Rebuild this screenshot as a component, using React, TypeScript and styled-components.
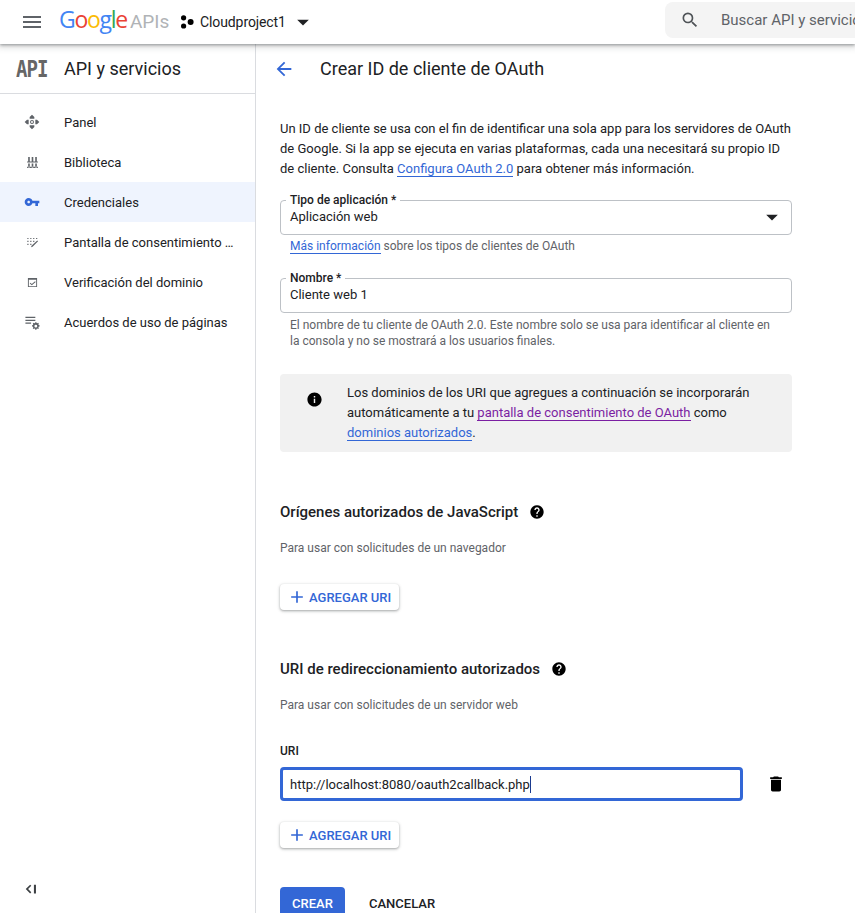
import styled, { createGlobalStyle } from 'styled-components'

const GlobalStyle = createGlobalStyle`
  html, body {
    margin: 0;
    padding: 0;
    height: 100%;
    overflow: hidden;
    background: #fff;
    font-family: Roboto, "Liberation Sans", Arial, sans-serif;
    color: #202124;
  }
  * { box-sizing: border-box; }
`

const BLUE = '#3367d6'

const icons = {
  menu: 'M3 18h18v-2H3v2zm0-5h18v-2H3v2zm0-7v2h18V6H3z',
  drop: 'M7 10l5 5 5-5z',
  search: 'M15.5 14h-.79l-.28-.27A6.471 6.471 0 0 0 16 9.5 6.5 6.5 0 1 0 9.5 16c1.61 0 3.09-.59 4.23-1.57l.27.28v.79l5 4.99L20.49 19l-4.99-5zm-6 0C7.01 14 5 11.99 5 9.5S7.01 5 9.5 5 14 7.01 14 9.5 11.99 14 9.5 14z',
  back: 'M20 11H7.83l5.59-5.59L12 4l-8 8 8 8 1.41-1.41L7.83 13H20v-2z',
  key: 'M12.65 10C11.83 7.67 9.61 6 7 6c-3.31 0-6 2.69-6 6s2.69 6 6 6c2.61 0 4.83-1.67 5.65-4H17v4h4v-4h2v-4H12.65zM7 14c-1.1 0-2-.9-2-2s.9-2 2-2 2 .9 2 2-.9 2-2 2z',
  info: 'M12 2C6.48 2 2 6.48 2 12s4.48 10 10 10 10-4.48 10-10S17.52 2 12 2zm1 15h-2v-6h2v6zm0-8h-2V7h2v2z',
  help: 'M12 2C6.48 2 2 6.48 2 12s4.48 10 10 10 10-4.48 10-10S17.52 2 12 2zm1 17h-2v-2h2v2zm2.07-7.75l-.9.92C13.45 12.9 13 13.5 13 15h-2v-.5c0-1.1.45-2.1 1.17-2.83l1.24-1.26c.37-.36.59-.86.59-1.41 0-1.1-.9-2-2-2s-2 .9-2 2H8c0-2.21 1.79-4 4-4s4 1.79 4 4c0 .88-.36 1.68-.93 2.25z',
  add: 'M19 13h-6v6h-2v-6H5v-2h6V5h2v6h6v2z',
  trash: 'M6 19c0 1.1.9 2 2 2h8c1.1 0 2-.9 2-2V7H6v12zM19 4h-3.5l-1-1h-5l-1 1H5v2h14V4z',
  panel: 'M12 1l3.5 3.5V7h-7V4.5zM12 23l-3.5-3.5V17h7v2.5zM1 12l3.5-3.5H7v7H4.5zM23 12l-3.5 3.5H17v-7h2.5zM12 9a3 3 0 1 0 0 6 3 3 0 0 0 0-6zM12 10.5a1.5 1.5 0 1 1 0 3 1.5 1.5 0 0 1 0-3z',
  library: 'M4 2h3v8H4zM10.5 2h3v8h-3zM17 2h3v8h-3zM2 10h20v2H2zM4 14h3v7H4zM10.5 14h3v7h-3zM17 14h3v7h-3zM2 20h20v2H2z',
  consent: 'M4 5h2v2H4zM9 5h2v2H9zM14 5h2v2h-2zM19 5h2v2h-2zM4 10h2v2H4zM9 10h2v2H9zM14 10h2v2h-2zM4 15h2v2H4zM9 15h2v2H9zM21 9.5l1.4 1.4L13 20.3l-2.5.6.6-2.5z',
  verify: 'M2 2h20v20H2zM4 6v14h16V6zM17.5 9.5L19 11l-8.5 7L6 14l1.5-1.5 3 2.5z',
  terms: 'M2 4h14v1.8H2zM2 8h14v1.8H2zM2 12h8v1.8H2zM17.5 11.5l.3 1.3 1 .4 1.1-.7 1.1 1.1-.7 1.1.4 1 1.3.3v1.6l-1.3.3-.4 1 .7 1.1-1.1 1.1-1.1-.7-1 .4-.3 1.3h-1.6l-.3-1.3-1-.4-1.1.7-1.1-1.1.7-1.1-.4-1-1.3-.3V16l1.3-.3.4-1-.7-1.1 1.1-1.1 1.1.7 1-.4.3-1.3zM16.7 15.2a2 2 0 1 0 0 4 2 2 0 0 0 0-4z',
  collapse: 'M12.5 6.5L10.5 4.5 3 12l7.5 7.5 2-2L7 12zM17 4.5h3.5v15H17z',
}

type IconName = keyof typeof icons

const Icon = ({ name, size = 24, color = 'currentColor' }: { name: IconName; size?: number; color?: string }) => (
  <svg width={size} height={size} viewBox="0 0 24 24" fill={color} fillRule="evenodd" style={{ flex: 'none', display: 'block' }}>
    <path d={icons[name]} />
  </svg>
)

const navItems: { label: string; icon: IconName; size: number; active?: boolean }[] = [
  { label: 'Panel', icon: 'panel', size: 16 },
  { label: 'Biblioteca', icon: 'library', size: 13 },
  { label: 'Credenciales', icon: 'key', size: 16, active: true },
  { label: 'Pantalla de consentimiento …', icon: 'consent', size: 14 },
  { label: 'Verificación del dominio', icon: 'verify', size: 11 },
  { label: 'Acuerdos de uso de páginas', icon: 'terms', size: 17 },
]

function App() {
  return (
    <Page>
      <GlobalStyle />
      <TopBar>
        <MenuButton>
          <Icon name="menu" size={24} color="#5f6368" />
        </MenuButton>
        <Logo>
          <span style={{ color: '#4285f4' }}>G</span>
          <span style={{ color: '#ea4335' }}>o</span>
          <span style={{ color: '#fbbc05' }}>o</span>
          <span style={{ color: '#4285f4' }}>g</span>
          <span style={{ color: '#34a853' }}>l</span>
          <span style={{ color: '#ea4335' }}>e</span>
          <LogoProduct>APIs</LogoProduct>
        </Logo>
        <Project>
          <svg width="14" height="14" viewBox="0 0 14 14" fill="#000">
            <circle cx="3.6" cy="2.8" r="2.6" />
            <circle cx="3.6" cy="11" r="2.6" />
            <circle cx="10.6" cy="7" r="3" />
          </svg>
          <ProjectName>Cloudproject1</ProjectName>
          <Icon name="drop" size={28} color="#202124" />
        </Project>
        <SearchBox>
          <Icon name="search" size={20} color="#4f5357" />
          <SearchText>Buscar API y servicios</SearchText>
        </SearchBox>
      </TopBar>
      <Body>
        <Sidebar>
          <SideTitle>
            <ApiMark>API</ApiMark>
            <SideTitleText>API y servicios</SideTitleText>
          </SideTitle>
          <Nav>
            {navItems.map((item) => (
              <NavItem key={item.label} $active={item.active}>
                <NavIcon>
                  <Icon name={item.icon} size={item.size} color={item.active ? BLUE : '#5f6368'} />
                </NavIcon>
                {item.label}
              </NavItem>
            ))}
          </Nav>
          <CollapseRow>
            <Icon name="collapse" size={14} color="#3c4043" />
          </CollapseRow>
        </Sidebar>
        <Main>
          <PageHead>
            <Icon name="back" size={22} color={BLUE} />
            <PageTitle>Crear ID de cliente de OAuth</PageTitle>
          </PageHead>
          <Content>
            <Intro>
              Un ID de cliente se usa con el fin de identificar una sola app para los servidores de OAuth de Google. Si la app se ejecuta en varias plataformas, cada una necesitará su propio ID de cliente. Consulta <Link>Configura OAuth 2.0</Link> para obtener más información.
            </Intro>
            <FieldBox $top={21}>
              <FieldLabel>Tipo de aplicación *</FieldLabel>
              <FieldValue>Aplicación web</FieldValue>
              <Icon name="drop" size={28} color="#202124" />
            </FieldBox>
            <Hint $top={3}>
              <Link>Más información</Link> sobre los tipos de clientes de OAuth
            </Hint>
            <FieldBox $top={24}>
              <FieldLabel>Nombre *</FieldLabel>
              <FieldValue>Cliente web 1</FieldValue>
            </FieldBox>
            <Hint $top={4}>
              El nombre de tu cliente de OAuth 2.0. Este nombre solo se usa para identificar al cliente en la consola y no se mostrará a los usuarios finales.
            </Hint>
            <InfoBox>
              <InfoIcon>
                <Icon name="info" size={17} color="#000" />
              </InfoIcon>
              <InfoText>
                Los dominios de los URI que agregues a continuación se incorporarán automáticamente a tu <VisitedLink>pantalla de consentimiento de OAuth</VisitedLink> como <Link>dominios autorizados</Link>.
              </InfoText>
            </InfoBox>
            <Section $top={49}>
              <SectionTitle>
                Orígenes autorizados de JavaScript
                <Icon name="help" size={16} color="#000" />
              </SectionTitle>
              <SectionHint>Para usar con solicitudes de un navegador</SectionHint>
              <AddButton $top={28}>
                <Icon name="add" size={20} color={BLUE} />
                AGREGAR URI
              </AddButton>
            </Section>
            <Section $top={48}>
              <SectionTitle>
                URI de redireccionamiento autorizados
                <Icon name="help" size={16} color="#000" />
              </SectionTitle>
              <SectionHint>Para usar con solicitudes de un servidor web</SectionHint>
              <UriLabel>URI</UriLabel>
              <UriRow>
                <UriInput>
                  http://localhost:8080/oauth2callback.php
                  <Caret />
                </UriInput>
                <Icon name="trash" size={20} color="#000" />
              </UriRow>
              <AddButton $top={21}>
                <Icon name="add" size={20} color={BLUE} />
                AGREGAR URI
              </AddButton>
            </Section>
            <Actions>
              <PrimaryButton>CREAR</PrimaryButton>
              <TextButton>CANCELAR</TextButton>
            </Actions>
          </Content>
        </Main>
      </Body>
    </Page>
  )
}

const Page = styled.div`
  width: 855px;
  height: 913px;
  overflow: hidden;
  display: flex;
  flex-direction: column;
`

const TopBar = styled.header`
  height: 44px;
  flex: none;
  display: flex;
  align-items: center;
  padding-left: 20px;
  background: #fff;
  box-shadow: 0 1px 3px rgba(60, 64, 67, 0.5), 0 2px 6px 2px rgba(60, 64, 67, 0.15);
  position: relative;
  z-index: 2;
`

const MenuButton = styled.div`
  width: 24px;
  height: 24px;
  margin-right: 15px;
`

const Logo = styled.div`
  width: 106px;
  font-family: "Open Sans", sans-serif;
  font-size: 23px;
  letter-spacing: -1.3px;
  line-height: 24px;
  white-space: nowrap;
  margin-top: -4px;
`

const LogoProduct = styled.span`
  color: #b0b3b6;
  margin-left: 3px;
  font-family: Roboto, sans-serif;
  font-size: 19px;
  letter-spacing: 0;
`

const Project = styled.div`
  display: flex;
  align-items: center;
  margin-left: 15px;
`

const ProjectName = styled.span`
  font-size: 14px;
  letter-spacing: -0.1px;
  color: #202124;
  margin: 0 3px 0 6px;
`

const SearchBox = styled.div`
  margin-left: auto;
  width: 190px;
  height: 36px;
  margin-top: -4px;
  border-radius: 8px 0 0 8px;
  background: #f4f4f4;
  display: flex;
  align-items: center;
  padding-left: 15px;
  overflow: hidden;
`

const SearchText = styled.span`
  margin-left: 21px;
  font-size: 15px;
  color: #5f6368;
  white-space: nowrap;
`

const Body = styled.div`
  flex: 1;
  display: flex;
  min-height: 0;
`

const Sidebar = styled.aside`
  width: 256px;
  flex: none;
  border-right: 1px solid #dadce0;
  display: flex;
  flex-direction: column;
`

const SideTitle = styled.div`
  height: 50px;
  flex: none;
  border-bottom: 1px solid #dadce0;
  display: flex;
  align-items: center;
  padding-left: 16px;
`

const ApiMark = styled.span`
  width: 48px;
  font-family: "DejaVu Sans Mono", monospace;
  font-weight: 700;
  font-size: 19px;
  letter-spacing: -1px;
  color: #666;
  transform: scaleY(1.2);
`

const SideTitleText = styled.span`
  font-size: 18px;
  color: #202124;
`

const Nav = styled.nav`
  padding-top: 8px;
`

const NavItem = styled.div<{ $active?: boolean }>`
  height: 40px;
  display: flex;
  align-items: center;
  font-size: 13px;
  padding-left: 24px;
  color: #202124;
  background: ${(p) => (p.$active ? '#eff4fe' : 'transparent')};
`

const NavIcon = styled.span`
  width: 16px;
  margin-right: 24px;
  display: flex;
  justify-content: center;
`

const CollapseRow = styled.div`
  margin-top: auto;
  padding: 0 0 17px 24px;
`

const Main = styled.main`
  flex: 1;
  min-width: 0;
`

const PageHead = styled.div`
  height: 50px;
  border-bottom: 1px solid transparent;
  display: flex;
  align-items: center;
  padding-left: 17px;
`

const PageTitle = styled.h1`
  margin: 0 0 0 25px;
  font-size: 18px;
  font-weight: 400;
  color: #202124;
`

const Content = styled.div`
  padding: 25px 63px 0 24px;
`

const Intro = styled.p`
  margin: 0;
  font-size: 13px;
  line-height: 20px;
  color: #202124;
`

const Link = styled.span`
  color: ${BLUE};
  border-bottom: 1px solid ${BLUE};
`

const VisitedLink = styled.span`
  color: #7b1fa2;
  border-bottom: 1px solid #7b1fa2;
`

const FieldBox = styled.div<{ $top: number }>`
  position: relative;
  height: 35px;
  margin-top: ${(p) => p.$top}px;
  border: 1px solid #bdc1c6;
  border-radius: 4px;
  display: flex;
  align-items: center;
  justify-content: space-between;
  padding: 0 5px 2px 9px;
`

const FieldLabel = styled.label`
  position: absolute;
  left: 5px;
  top: -8px;
  padding: 0 4px;
  background: #fff;
  font-size: 12px;
  line-height: 14px;
  font-weight: 500;
  color: #202124;
`

const FieldValue = styled.span`
  font-size: 13px;
  color: #202124;
`

const Hint = styled.p<{ $top: number }>`
  margin: ${(p) => p.$top}px 0 0;
  padding: 0 20px 0 10px;
  font-size: 12px;
  line-height: 16px;
  color: #5f6368;
`

const InfoBox = styled.div`
  margin-top: 25px;
  height: 78px;
  background: #f1f1f1;
  border-radius: 4px;
  display: flex;
  padding: 9px 20px 0 0;
`

const InfoIcon = styled.div`
  width: 67px;
  flex: none;
  padding: 8px 0 0 26px;
`

const InfoText = styled.div`
  font-size: 13px;
  line-height: 20px;
  color: #202124;
`

const Section = styled.section<{ $top: number }>`
  margin-top: ${(p) => p.$top}px;
`

const SectionTitle = styled.h2`
  margin: 0;
  display: flex;
  align-items: center;
  gap: 11px;
  font-size: 15px;
  line-height: 22px;
  font-weight: 500;
  color: #202124;
`

const SectionHint = styled.p`
  margin: 17px 0 0;
  font-size: 12px;
  line-height: 16px;
  color: #5f6368;
`

const AddButton = styled.div<{ $top: number }>`
  margin-top: ${(p) => p.$top}px;
  width: 119px;
  height: 26px;
  display: flex;
  align-items: center;
  gap: 2px;
  padding-left: 7px;
  background: #fff;
  border-radius: 4px;
  box-shadow: 0 1px 2px rgba(60, 64, 67, 0.3), 0 1px 3px 1px rgba(60, 64, 67, 0.15);
  font-size: 13px;
  font-weight: 500;
  color: ${BLUE};
`

const UriLabel = styled.div`
  margin-top: 30px;
  font-size: 12px;
  line-height: 16px;
  font-weight: 500;
  color: #202124;
`

const UriRow = styled.div`
  margin-top: 8px;
  display: flex;
  align-items: center;
  gap: 23px;
`

const UriInput = styled.div`
  width: 463px;
  height: 34px;
  border: 3px solid ${BLUE};
  border-radius: 4px;
  display: flex;
  align-items: center;
  padding-left: 7px;
  font-size: 13px;
  color: #202124;
`

const Caret = styled.span`
  width: 1px;
  height: 17px;
  background: #1a3a8f;
`

const Actions = styled.div`
  margin-top: 39px;
  display: flex;
  align-items: center;
`

const PrimaryButton = styled.div`
  width: 65px;
  height: 32px;
  border-radius: 4px;
  background: ${BLUE};
  color: #fff;
  font-size: 13px;
  font-weight: 500;
  display: flex;
  align-items: center;
  justify-content: center;
`

const TextButton = styled.div`
  margin-left: 24px;
  font-size: 13px;
  font-weight: 500;
  color: #202124;
`

export default App
